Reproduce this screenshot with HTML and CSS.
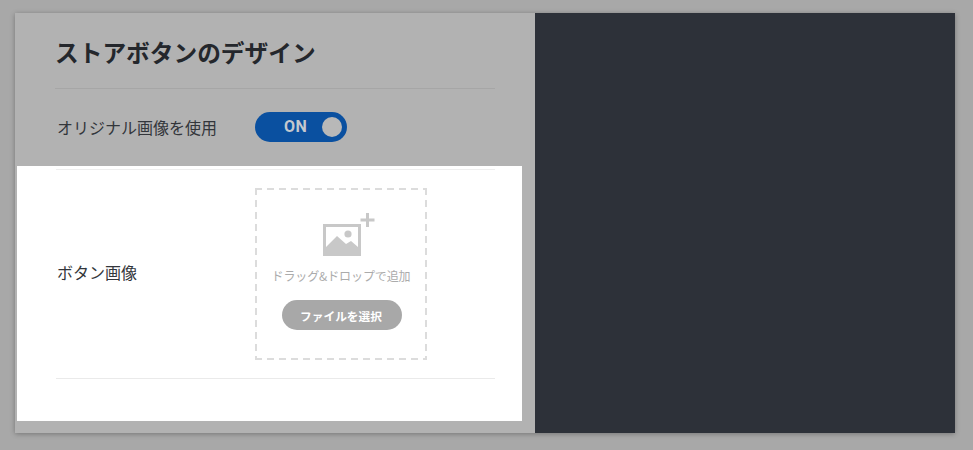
FILE: index.html
```html
<!DOCTYPE html>
<html lang="ja">
<head>
    <meta charset="UTF-8">
    <meta name="viewport" content="width=device-width, initial-scale=1.0">
    <title>ストアボタンのデザイン</title>
    <link rel="stylesheet" href="styles.css">
</head>
<body>
    <div class="card">
        <div class="panel">
            <div class="panel-head">
                <h1 class="title">ストアボタンのデザイン</h1>
                <div class="row row-switch">
                    <span class="label">オリジナル画像を使用</span>
                    <div class="switch">
                        <span class="switch-text">ON</span>
                        <span class="switch-knob"></span>
                    </div>
                </div>
            </div>
            <div class="focus">
                <div class="row row-image">
                    <span class="label label-image">ボタン画像</span>
                    <div class="dropzone">
                        <svg class="drop-icon" width="54" height="46" viewBox="0 0 54 46">
                            <path fill="#c8c8c8" d="M2 12h38v32H2z"/>
                            <path fill="#fff" d="M5 15h32v26H5z"/>
                            <path fill="#c8c8c8" d="M5 41V35l11-11 9 8 5-3 7 6v6z"/>
                            <circle fill="#c8c8c8" cx="27" cy="22" r="3.6"/>
                            <path fill="#c8c8c8" d="M45 1h3v5.500h5.500v3H48V15h-3V9.500h-5.500v-3H45z"/>
                        </svg>
                        <p class="drop-text">ドラッグ&amp;ドロップで追加</p>
                        <button type="button" class="file-button">ファイルを選択</button>
                    </div>
                </div>
            </div>
        </div>
        <div class="preview"></div>
    </div>
</body>
</html>
```

FILE: styles.css
```css
body {
    margin: 0;
    height: 450px;
    overflow: hidden;
    background-color: #a8a8a8;
    font-family: "Noto Sans CJK JP", "Noto Sans", sans-serif;
    color: #25282d;
}
.card {
    display: flex;
    width: 940px;
    height: 420px;
    margin: 13px 0 0 15px;
    background-color: #b2b2b2;
    box-shadow: 0 1px 5px rgba(0, 0, 0, 0.3);
}
.panel {
    width: 520px;
}
.panel-head {
    height: 153px;
    padding: 0 40px 0 40px;
}
.title {
    height: 75px;
    margin: 0;
    border-bottom: 1px solid #a6a6a6;
    font-size: 23.700px;
    font-weight: 700;
    line-height: 78px;
    color: #24272c;
}
.row {
    display: flex;
    align-items: center;
}
.row-switch {
    height: 75px;
}
.label {
    width: 198px;
    padding-left: 2px;
    font-size: 16px;
    color: #33363b;
}
.label-image {
    padding-left: 1px;
    padding-bottom: 5px;
}
.switch {
    display: flex;
    align-items: center;
    justify-content: flex-end;
    gap: 15px;
    box-sizing: border-box;
    width: 92px;
    height: 30px;
    padding-right: 5px;
    border-radius: 15px;
    background-color: #0a50a0;
}
.switch-text {
    font-family: "Roboto", sans-serif;
    font-size: 16px;
    font-weight: 700;
    letter-spacing: 0.3px;
    color: #c4c8ce;
}
.switch-knob {
    width: 20px;
    height: 20px;
    border-radius: 50%;
    background-color: #b8b8b8;
}
.focus {
    box-sizing: border-box;
    width: 505px;
    height: 255px;
    margin-left: 2px;
    padding: 3px 27px 0 39px;
    background-color: #fff;
}
.row-image {
    height: 208px;
    border-top: 1px solid #eee;
    border-bottom: 1px solid #eaeaea;
}
.dropzone {
    display: flex;
    flex-direction: column;
    align-items: center;
    box-sizing: border-box;
    width: 172px;
    height: 172px;
    padding-top: 24px;
    background-image:
        repeating-linear-gradient(to right, #dcdcdc 0 7px, transparent 7px 12px),
        repeating-linear-gradient(to right, #dcdcdc 0 7px, transparent 7px 12px),
        repeating-linear-gradient(to bottom, #dcdcdc 0 7px, transparent 7px 12px),
        repeating-linear-gradient(to bottom, #dcdcdc 0 7px, transparent 7px 12px);
    background-size: 100% 2px, 100% 2px, 2px 100%, 2px 100%;
    background-position: top, bottom, left, right;
    background-repeat: no-repeat;
}
.drop-icon {
    margin-left: 14px;
}
.drop-text {
    margin: 9px 0 0;
    font-size: 12px;
    letter-spacing: -0.1px;
    line-height: 18px;
    color: #ababab;
}
.file-button {
    width: 120px;
    height: 30px;
    margin: 15px 0 0 2px;
    padding: 0 2px 0 0;
    border: none;
    border-radius: 15px;
    background-color: #a8a8a8;
    font-family: inherit;
    font-size: 11.700px;
    font-weight: 700;
    color: #fff;
}
.preview {
    width: 420px;
    background-color: #2d3139;
}
```
